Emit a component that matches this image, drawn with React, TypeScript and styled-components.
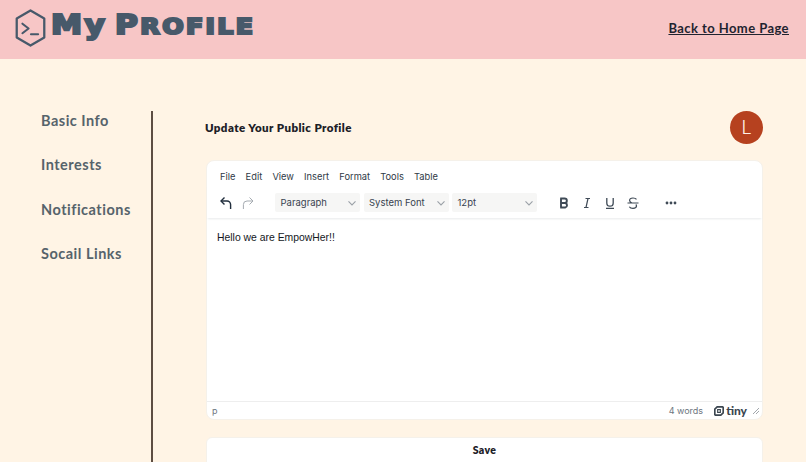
import React from 'react';
import styled, {createGlobalStyle} from 'styled-components';

const Global = createGlobalStyle`
  html, body {
    margin: 0;
    height: 100%;
    overflow: hidden;
    background: #fff4e5;
  }
`;

const Page = styled.div`
  width: 806px;
  height: 462px;
  overflow: hidden;
  display: flex;
  flex-direction: column;
`;

const Header = styled.header`
  height: 59px;
  flex: none;
  background: #f7c6c6;
  display: flex;
  align-items: center;
  justify-content: space-between;
  padding: 0 17px 0 14px;
`;

const Brand = styled.div`
  display: flex;
  align-items: center;
  gap: 4px;
  padding-bottom: 4px;
`;

const Title = styled.h1`
  margin: 0;
  font-family: "DejaVu Sans", sans-serif;
  font-weight: 700;
  font-size: 26px;
  line-height: 36px;
  letter-spacing: 2px;
  word-spacing: -4.5px;
  color: #47596a;
  -webkit-text-stroke: 2.2px #47596a;
  transform: scaleX(1.2);
  transform-origin: left center;
  position: relative;
  top: -2px;
`;

const TitleCaps = styled.span`
  font-size: 21px;
  text-transform: uppercase;
`;

const HomeLink = styled.a`
  font-family: "Lato", sans-serif;
  font-weight: 700;
  font-size: 13px;
  letter-spacing: 0.43px;
  color: #1f2430;
  text-decoration: underline;
  position: relative;
  top: -2px;
`;

const Body = styled.div`
  flex: 1;
  display: flex;
  padding-top: 52px;
  min-height: 0;
`;

const Side = styled.nav`
  width: 110px;
  margin-right: 53px;
  padding-left: 41px;
  border-right: 2px solid #5d4d42;
  display: flex;
  flex-direction: column;
  gap: 23.3px;
  box-sizing: content-box;
`;

const SideItem = styled.div`
  font-family: "Lato", sans-serif;
  font-weight: 700;
  font-size: 14.5px;
  line-height: 21px;
  letter-spacing: 0.5px;
  color: #56636b;
  position: relative;
  top: -1px;
`;

const Main = styled.main`
  width: 557px;
  flex: none;
  display: flex;
  flex-direction: column;
`;

const TopRow = styled.div`
  height: 33px;
  flex: none;
  margin-bottom: 16px;
  display: flex;
  justify-content: space-between;
  align-items: center;
`;

const Heading = styled.h2`
  margin: 0 0 0 -1px;
  font-family: "Lato", sans-serif;
  font-weight: 800;
  font-size: 11.5px;
  letter-spacing: 0.42px;
  color: #1c2027;
`;

const Avatar = styled.div`
  width: 33px;
  height: 33px;
  border-radius: 50%;
  background: #b6411f;
  color: #fff0e8;
  display: flex;
  align-items: center;
  justify-content: center;
  font-family: "Inter", sans-serif;
  font-weight: 300;
  font-size: 18px;
`;

const Editor = styled.section`
  height: 260px;
  flex: none;
  background: #fff;
  border-radius: 8px;
  border: 1px solid #f5f1ea;
  box-sizing: border-box;
  display: flex;
  flex-direction: column;
  font-family: "Inter", sans-serif;
`;

const MenuBar = styled.div`
  height: 23px;
  flex: none;
  padding: 0 13px 0 13px;
  display: flex;
  align-items: flex-end;
  gap: 10.2px;
`;

const MenuItem = styled.span`
  font-size: 9.3px;
  line-height: 15px;
  color: #2f3a46;
`;

const ToolBar = styled.div`
  height: 34px;
  flex: none;
  padding: 3px 0 0 10px;
  box-sizing: border-box;
  display: flex;
  align-items: center;
  box-shadow: 0 2px 2px -1px rgba(34, 47, 62, 0.1);
`;

const ToolIcon = styled.span<{$w?: number}>`
  width: ${(p) => p.$w ?? 23}px;
  height: 24px;
  display: flex;
  align-items: center;
  justify-content: center;
  flex: none;
`;

const Select = styled.div<{$w: number}>`
  width: ${(p) => p.$w}px;
  height: 19px;
  margin-right: 3.5px;
  padding: 0 3px 0 5.5px;
  box-sizing: border-box;
  background: #f6f6f5;
  border-radius: 2px;
  display: flex;
  align-items: center;
  justify-content: space-between;
  font-size: 9.5px;
  color: #384350;
`;

const Content = styled.div`
  flex: 1;
  padding: 12px 10px;
  font-family: "Liberation Sans", sans-serif;
  font-size: 10.4px;
  line-height: 15px;
  color: #14181d;
`;

const StatusBar = styled.div`
  height: 17px;
  flex: none;
  padding: 0 3px 0 5px;
  border-top: 1px solid #eeeeee;
  display: flex;
  align-items: center;
  justify-content: space-between;
  font-size: 9px;
  color: #6d7680;
`;

const StatusRight = styled.div`
  display: flex;
  align-items: center;
`;

const Tiny = styled.span`
  display: flex;
  align-items: center;
  gap: 2px;
  margin-left: 11px;
  margin-right: 6px;
  font-family: "Lato", sans-serif;
  font-weight: 900;
  font-size: 12px;
  line-height: 12px;
  color: #3b4650;
`;

const SaveButton = styled.button`
  margin-top: 17px;
  height: 46px;
  flex: none;
  padding: 0 0 20px;
  border: 1px solid #f5f1ea;
  border-radius: 6px;
  background: #fff;
  font-family: "Lato", sans-serif;
  font-weight: 800;
  font-size: 10.5px;
  letter-spacing: 0.3px;
  color: #1c2027;
`;

const Chevron = () => (
  <svg width="10" height="10" viewBox="0 0 10 10" fill="none" stroke="#9aa0a6" strokeWidth="1.1">
    <path d="M1.5 3.4 5 7 8.5 3.4"/>
  </svg>
);

const Logo = () => (
  <svg width="33" height="38" viewBox="0 0 34 40" fill="none" stroke="#47596a" strokeWidth="2" strokeLinejoin="round" strokeLinecap="round">
    <path d="M17 1.5 31.5 10v20L17 38.5 2.5 30V10z" strokeWidth="2.4"/>
    <path d="M8.5 15.5 15 20.5 8.5 25.5" strokeWidth="2.2"/>
    <path d="M17.5 26.5h7.5" strokeWidth="2.2"/>
  </svg>
);

const Undo = ({color, flip}: {color: string; flip?: boolean}) => (
  <svg width="14" height="14" viewBox="0 0 14 14" fill="none" stroke={color} strokeWidth={flip ? 1 : 1.4} style={flip ? {transform: 'scaleX(-1)'} : undefined}>
    <path d="M5.5 1.5 2 5l3.5 3.5"/>
    <path d="M2 5h6a3.6 3.6 0 0 1 3.6 3.6V13"/>
  </svg>
);

const iconColor = '#3f4a56';

function App() {
  return (
    <Page>
      <Global/>
      <Header>
        <Brand>
          <Logo/>
          <Title>My P<TitleCaps>rofile</TitleCaps></Title>
        </Brand>
        <HomeLink href="#">Back to Home Page</HomeLink>
      </Header>
      <Body>
        <Side>
          {['Basic Info', 'Interests', 'Notifications', 'Socail Links'].map((s) => (
            <SideItem key={s}>{s}</SideItem>
          ))}
        </Side>
        <Main>
          <TopRow>
            <Heading>Update Your Public Profile</Heading>
            <Avatar>L</Avatar>
          </TopRow>
          <Editor>
            <MenuBar>
              {['File', 'Edit', 'View', 'Insert', 'Format', 'Tools', 'Table'].map((m) => (
                <MenuItem key={m}>{m}</MenuItem>
              ))}
            </MenuBar>
            <ToolBar>
              <ToolIcon $w={17}><Undo color="#222f3e"/></ToolIcon>
              <ToolIcon $w={28}><Undo color="#a5abb1" flip/></ToolIcon>
              <ToolIcon $w={13}/>
              <Select $w={85}>Paragraph<Chevron/></Select>
              <Select $w={85}>System Font<Chevron/></Select>
              <Select $w={85}>12pt<Chevron/></Select>
              <ToolIcon $w={12}/>
              <ToolIcon>
                <svg width="14" height="14" viewBox="0 0 14 14" fill="none" stroke={iconColor} strokeWidth="1.9">
                  <path d="M3.2 2.5h4.4a2.2 2.2 0 0 1 0 4.5H4M4 2.5v9M4 7h4.2a2.3 2.3 0 0 1 0 4.5H3.2"/>
                </svg>
              </ToolIcon>
              <ToolIcon>
                <svg width="14" height="14" viewBox="0 0 14 14" fill="none" stroke={iconColor} strokeWidth="1.1">
                  <path d="M5.5 2.5h4.5M4 11.5h4.5M8 2.5l-2 9" strokeWidth="1.2"/>
                </svg>
              </ToolIcon>
              <ToolIcon>
                <svg width="14" height="14" viewBox="0 0 14 14" fill="none" stroke={iconColor} strokeWidth="1.3">
                  <path d="M3.8 2v5a3.2 3.2 0 0 0 6.4 0V2M3 12.3h8"/>
                </svg>
              </ToolIcon>
              <ToolIcon>
                <svg width="14" height="14" viewBox="0 0 14 14" fill="none" stroke={iconColor} strokeWidth="1.2">
                  <path d="M10.5 3.4C9.8 2.4 8.6 2 7 2 5 2 3.6 3 3.6 4.5c0 1.2.9 2 2.4 2.5M1.5 7h11M9.8 8.5c.5.5.7 1 .7 1.6 0 1.4-1.5 2.2-3.5 2.2-1.7 0-3-.5-3.7-1.6"/>
                </svg>
              </ToolIcon>
              <ToolIcon $w={16}/>
              <ToolIcon $w={21}>
                <svg width="12" height="4" viewBox="0 0 12 4" fill={iconColor}>
                  <circle cx="2" cy="2" r="1.4"/><circle cx="6" cy="2" r="1.4"/><circle cx="10" cy="2" r="1.4"/>
                </svg>
              </ToolIcon>
            </ToolBar>
            <Content>Hello we are EmpowHer!!</Content>
            <StatusBar>
              <span>p</span>
              <StatusRight>
                <span>4 words</span>
                <Tiny>
                  <svg width="10" height="10" viewBox="0 0 11 11" fill="none" stroke="#3b4650">
                    <path d="M3.5 1h6a.7.7 0 0 1 .6.6v6L7.5 10h-6a.7.7 0 0 1-.6-.6v-6z" strokeWidth="1.8"/>
                    <path d="M4 4h3v3H4z" strokeWidth="1.2"/>
                  </svg>
                  tiny
                </Tiny>
                <svg width="6" height="6" viewBox="0 0 6 6" stroke="#8a9097" strokeWidth="0.8">
                  <path d="M0 6 6 0M3 6l3-3"/>
                </svg>
              </StatusRight>
            </StatusBar>
          </Editor>
          <SaveButton>Save</SaveButton>
        </Main>
      </Body>
    </Page>
  );
}

export default App;
